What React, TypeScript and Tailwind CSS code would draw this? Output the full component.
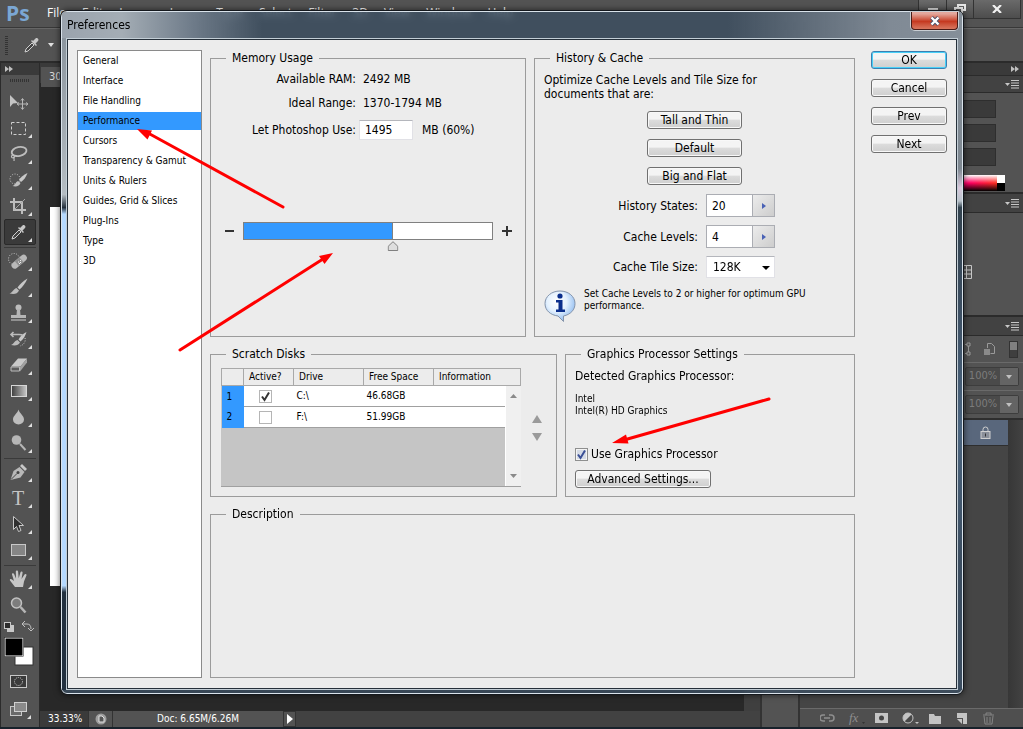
import React, { useState } from 'react';

const MENUS = ['File', 'Edit', 'Image', 'Layer', 'Type', 'Select', 'Filter', '3D', 'View', 'Window', 'Help'];

const SECTIONS = [
  'General',
  'Interface',
  'File Handling',
  'Performance',
  'Cursors',
  'Transparency & Gamut',
  'Units & Rulers',
  'Guides, Grid & Slices',
  'Plug-Ins',
  'Type',
  '3D',
];

const DISKS = [
  { id: 1, drive: 'C:\\', free: '46.68GB', active: true },
  { id: 2, drive: 'F:\\', free: '51.99GB', active: false },
];

const RAM_MAX = 2492;

/* ---------- tool icons (20x20) ---------- */

const EyedropperIcon = () => (
  <svg viewBox="0 0 20 20" className="size-5">
    <path d="M4 17l1-3 6-6 2 2-6 6z" fill="#444" stroke="#d0d0d0" />
    <path d="M10 6l5 5 1-1-1.500-1.500 2.500-2.500c1.500-1.500-1-4-2.500-2.500L12 6 11 5z" fill="#c8c8c8" />
  </svg>
);

const TOOL_GROUPS: { name: string; icon: React.ReactNode; plain?: boolean }[][] = [
  [
    {
      name: 'Move',
      plain: true,
      icon: (
        <svg viewBox="0 0 20 20" className="size-5">
          <path d="M2 3v12l3-3.500 5-.5z" fill="#c4c4c4" />
          <path d="M14.500 7v10M9.500 12h10M13 8.500l1.500-2 1.500 2M13 15.500l1.500 2 1.500-2M11 10.500l-2 1.500 2 1.500M18 10.500l2 1.500-2 1.500" fill="none" stroke="#b8b8b8" />
        </svg>
      ),
    },
    {
      name: 'Rectangular Marquee',
      icon: (
        <svg viewBox="0 0 20 20" className="size-5">
          <rect x="3.500" y="4.500" width="14" height="12" fill="none" stroke="#cfcfcf" strokeDasharray="3 2" />
        </svg>
      ),
    },
    {
      name: 'Lasso',
      icon: (
        <svg viewBox="0 0 20 20" className="size-5">
          <ellipse cx="11" cy="7.500" rx="7.500" ry="4.500" transform="rotate(-12 11 7)" fill="none" stroke="#bdbdbd" strokeWidth="1.800" />
          <path d="M5 11c-2 0-2 3 0 3s2-2.500 0-3M5 13c2 1 1 3 1 4" fill="none" stroke="#bdbdbd" strokeWidth="1.200" />
        </svg>
      ),
    },
    {
      name: 'Quick Selection',
      icon: (
        <svg viewBox="0 0 20 20" className="size-5">
          <circle cx="7" cy="9" r="5" fill="none" stroke="#c8c8c8" strokeDasharray="1 1.500" />
          <path d="M19.500 3c-4 2-7 4-8.500 7l2 2c3-2 5-5 6.500-9z" fill="#c8c8c8" />
          <path d="M10 11l2.500 2c-1 3-4 4-8 3 3-1 3-4 5.500-5z" fill="#c0c0c0" />
        </svg>
      ),
    },
    {
      name: 'Crop',
      icon: (
        <svg viewBox="0 0 20 20" className="size-5">
          <path d="M6 2v12h12M2 6h12v12" fill="none" stroke="#bdbdbd" strokeWidth="2" />
          <path d="M6.500 13.500L17 3" stroke="#a5a5a5" />
        </svg>
      ),
    },
    { name: 'Eyedropper', icon: <EyedropperIcon /> },
  ],
  [
    {
      name: 'Spot Healing Brush',
      icon: (
        <svg viewBox="0 0 20 20" className="size-5">
          <circle cx="6" cy="8" r="5.500" fill="none" stroke="#c8c8c8" strokeDasharray="1 1.500" />
          <rect x="2" y="7.500" width="18" height="6.500" rx="3.200" transform="rotate(-40 11 10.500)" fill="#b9b9b9" />
          <rect x="8" y="7.500" width="6" height="6.500" transform="rotate(-40 11 10.500)" fill="#8e8e8e" />
          <path d="M10 11h1M12 9.500h1M11 12.500h1M12 11.500h1" stroke="#eee" />
        </svg>
      ),
    },
    {
      name: 'Brush',
      icon: (
        <svg viewBox="0 0 20 20" className="size-5">
          <path d="M19.500 1.500C15 4 12 7 9.500 10.500l2 2C15 9.500 17.500 6 19.500 1.500z" fill="#c8c8c8" />
          <path d="M8.500 11l2.500 2.500C9.500 17 6 17.500 1.500 16.500 5 15.500 5 12 8.500 11z" fill="#bcbcbc" />
        </svg>
      ),
    },
    {
      name: 'Clone Stamp',
      icon: (
        <svg viewBox="0 0 20 20" className="size-5">
          <circle cx="10.500" cy="4.500" r="3" fill="#bcbcbc" />
          <path d="M9 6h3l.5 6H18v3H3v-3h5.500z" fill="#b5b5b5" />
          <path d="M3 17h15" stroke="#a5a5a5" strokeWidth="1.500" />
        </svg>
      ),
    },
    {
      name: 'History Brush',
      icon: (
        <svg viewBox="0 0 20 20" className="size-5">
          <path d="M18.500 3C14 5 12 8 10.500 10.500l2 2c3-2.500 5-6 6-9.500z" fill="#c8c8c8" />
          <path d="M9.500 11l2.500 2.500c-1.500 3-5 3.500-9 2.500 3-1 3-4 6.500-5z" fill="#bcbcbc" />
          <path d="M3 5.500h8c2 0 3 0 4 1M5.500 3L3 5.500 5.500 8" fill="none" stroke="#bcbcbc" strokeWidth="1.600" />
          <path d="M17 9c1 3-1 7-5 8" fill="none" stroke="#c8c8c8" strokeDasharray="1 1.500" />
        </svg>
      ),
    },
    {
      name: 'Eraser',
      icon: (
        <svg viewBox="0 0 20 20" className="size-5">
          <path d="M10 3.500h9l-6.500 8H3z" fill="#c9c9c9" />
          <path d="M3 12h8.500v4H3z" fill="#5c5c5c" stroke="#bbb" />
          <path d="M12 12l7-8.500v4L12 16.500z" fill="#a2a2a2" />
        </svg>
      ),
    },
    {
      name: 'Gradient',
      icon: (
        <svg viewBox="0 0 20 20" className="size-5">
          <defs>
            <linearGradient id="toolGradient">
              <stop stopColor="#3d3d3d" />
              <stop offset="1" stopColor="#c8c8c8" />
            </linearGradient>
          </defs>
          <rect x="3.500" y="4.500" width="15" height="11" fill="url(#toolGradient)" stroke="#d6d6d6" />
        </svg>
      ),
    },
    {
      name: 'Blur',
      icon: (
        <svg viewBox="0 0 20 20" className="size-5">
          <path d="M10.500 2.500c1 4 5.500 6 5.500 10a5.500 5 0 01-11 0c0-4 4.500-6 5.500-10z" fill="#bdbdbd" />
        </svg>
      ),
    },
    {
      name: 'Dodge',
      icon: (
        <svg viewBox="0 0 20 20" className="size-5">
          <circle cx="8.500" cy="7" r="4.800" fill="#b6b6b6" />
          <path d="M12 11l5.500 6" stroke="#b6b6b6" strokeWidth="2" />
        </svg>
      ),
    },
  ],
  [
    {
      name: 'Pen',
      icon: (
        <svg viewBox="0 0 20 20" className="size-5">
          <path d="M2.500 18l3-9 6-4 5 5-4 5.500z" fill="#b8b8b8" />
          <path d="M12 4l2-2 5 5-2 2z" fill="#c8c8c8" />
          <path d="M3 17.500l6-6" stroke="#444" />
          <circle cx="10" cy="10.500" r="1.500" fill="#444" />
        </svg>
      ),
    },
    {
      name: 'Type',
      icon: <span className="font-['Liberation_Serif',serif] text-[20px] leading-5 text-[#c4c4c4]">T</span>,
    },
    {
      name: 'Path Selection',
      icon: (
        <svg viewBox="0 0 20 20" className="size-5">
          <path d="M5.500 2.500v13l3-3 2 5 2.500-1-2-5h4.500z" fill="#2f2f2f" stroke="#c8c8c8" />
        </svg>
      ),
    },
    {
      name: 'Rectangle',
      icon: (
        <svg viewBox="0 0 20 20" className="size-5">
          <rect x="3.500" y="4.500" width="14" height="11" fill="#858585" stroke="#c8c8c8" />
        </svg>
      ),
    },
  ],
  [
    {
      name: 'Hand',
      icon: (
        <svg viewBox="0 0 20 20" className="size-5">
          <path d="M7 18L2 11.500c-.8-1.500 1-2 2-1L6 12 4 5.500c-.3-1.400 1.600-1.800 2.100-.5L8 9.500 7.800 2.500c0-1.500 2.200-1.500 2.300 0l.6 6.700L12.500 3.300c.4-1.400 2.300-1 2.100.4L13.500 10l3-4.500c.8-1.200 2.500-.4 1.900.9L16 12.500 15 18z" fill="#c6c6c6" />
        </svg>
      ),
    },
    {
      name: 'Zoom',
      plain: true,
      icon: (
        <svg viewBox="0 0 20 20" className="size-5">
          <circle cx="8.500" cy="8" r="5" fill="#7d7d7d" stroke="#c2c2c2" strokeWidth="1.500" />
          <path d="M12.500 12l5 5.500" stroke="#b6b6b6" strokeWidth="2.600" />
        </svg>
      ),
    },
  ],
];

/* ---------- dialog building blocks ---------- */

interface GroupProps {
  title: string;
  className?: string;
  children?: React.ReactNode;
}

function Group({ title, className = '', children }: GroupProps) {
  return (
    <fieldset className={`min-w-0 border border-[#9b9b9b] ${className}`}>
      <legend className="ml-[15px] px-[6px] leading-4">{title}</legend>
      {children}
    </fieldset>
  );
}

function PushButton({ children, primary, className = '' }: { children: React.ReactNode; primary?: boolean; className?: string }) {
  return (
    <button
      type="button"
      className={`h-[18px] rounded-[3px] border bg-linear-to-b from-[#f4f4f4] from-45% via-[#dcdcdc] via-50% to-[#cfcfcf] leading-4 ${
        primary ? 'border-[#3c7fb1] shadow-[inset_0_0_0_1px_#48d0f8]' : 'border-[#707070] shadow-[inset_0_0_0_1px_#f8f8f8]'
      } ${className}`}
    >
      {children}
    </button>
  );
}

function StepField({ id, value }: { id: string; value: string }) {
  return (
    <div className="flex h-[23px] w-[69px] border border-[#abadb3] bg-white">
      <input id={id} defaultValue={value} className="w-[45px] bg-white pl-[5px] outline-none" />
      <button type="button" aria-label="Open slider" className="grid flex-1 place-items-center border-l border-[#abadb3] bg-linear-to-br from-[#ececec] to-[#cdcdcd]">
        <svg viewBox="0 0 4 6" className="h-[6px] w-[4px]">
          <path d="M0 0l4 3-4 3z" fill="#4a62b5" />
        </svg>
      </button>
    </div>
  );
}

function CheckBox({ id, label, checked, onChange, blue }: { id: string; label?: string; checked: boolean; onChange: () => void; blue?: boolean }) {
  return (
    <span className="relative inline-block size-[13px] align-middle">
      <input
        id={id}
        type="checkbox"
        aria-label={label}
        checked={checked}
        onChange={onChange}
        className={`block size-[13px] appearance-none border ${blue ? 'border-[#8e8f8f] bg-[#d5dbe6] shadow-[inset_0_0_0_1px_#f4f4f4]' : 'border-[#b5b5b5] bg-white'}`}
      />
      {checked && (
        <svg viewBox="0 0 13 13" className="pointer-events-none absolute inset-0 size-[13px]">
          <path d="M3 6.500l2.500 3.500L10 2.500" fill="none" stroke={blue ? '#3a4f96' : '#333'} strokeWidth="2" />
        </svg>
      )}
    </span>
  );
}

function MemoryUsage() {
  const [ram, setRam] = useState(1495);
  const pct = (ram / RAM_MAX) * 100;

  return (
    <Group title="Memory Usage" className="h-[287px] w-[316px]">
      <div className="grid grid-cols-[145px_1fr] gap-x-[7px] pt-px leading-6">
        <span className="text-right">Available RAM:</span>
        <span>{RAM_MAX} MB</span>
        <span className="text-right">Ideal Range:</span>
        <span>1370-1794 MB</span>
        <label htmlFor="ram" className="pt-[3px] text-right">Let Photoshop Use:</label>
        <span className="flex items-center gap-[9px] pt-[3px]">
          <input
            id="ram"
            value={ram}
            onChange={(e) => setRam(Number(e.target.value) || 0)}
            className="-ml-1 h-5 w-[54px] border border-[#e1e1e6] border-t-[#b4b6bc] bg-white pl-[5px] outline-none"
          />
          MB ({Math.round(pct)}%)
        </span>
      </div>

      <div className="mt-20 flex items-start justify-center gap-[9px]">
        <button type="button" aria-label="Less" className="grid h-[18px] w-[10px] place-items-center">
          <span className="h-[2px] w-[9px] bg-[#333]" />
        </button>
        <div className="relative w-[250px]">
          <div className="h-[18px] border border-[#808080] bg-white">
            <div className="h-full border-r border-[#808080] bg-[#3399ff]" style={{ width: `${pct}%` }} />
          </div>
          <svg viewBox="0 0 11 10" className="absolute top-[19px] h-[10px] w-[11px] -translate-x-1/2" style={{ left: `${pct}%` }}>
            <path d="M5.500.7l4.800 4.600v4.200H.7V5.300z" fill="#dedede" stroke="#808080" />
          </svg>
          <input
            type="range"
            aria-label="Memory"
            min={0}
            max={RAM_MAX}
            value={ram}
            onChange={(e) => setRam(Number(e.target.value))}
            className="absolute inset-0 h-[28px] w-full opacity-0"
          />
        </div>
        <button type="button" aria-label="More" className="grid h-[18px] w-[10px] place-items-center">
          <svg viewBox="0 0 10 10" className="size-[10px]">
            <path d="M5 0v10M0 5h10" stroke="#333" strokeWidth="2" />
          </svg>
        </button>
      </div>
    </Group>
  );
}

function HistoryCache() {
  return (
    <Group title="History & Cache" className="h-[287px] flex-1">
      <p className="pt-[7px] pl-[9px] leading-[14px]">
        Optimize Cache Levels and Tile Size for
        <br />
        documents that are:
      </p>
      <div className="mt-[10px] flex flex-col items-center gap-[10px]">
        <PushButton className="w-[95px]">Tall and Thin</PushButton>
        <PushButton className="w-[95px]">Default</PushButton>
        <PushButton className="w-[95px]">Big and Flat</PushButton>
      </div>
      <div className="mt-[9px] grid grid-cols-[163px_1fr] items-center gap-x-2 gap-y-2">
        <label htmlFor="history" className="text-right">History States:</label>
        <StepField id="history" value="20" />
        <label htmlFor="levels" className="text-right">Cache Levels:</label>
        <StepField id="levels" value="4" />
        <label htmlFor="tile" className="text-right">Cache Tile Size:</label>
        <div className="relative w-[69px]">
          <select id="tile" defaultValue="128K" className="block h-[22px] w-full appearance-none border border-[#e1e1e6] border-t-[#b4b6bc] bg-white pl-[6px] outline-none">
            <option>128K</option>
            <option>256K</option>
            <option>1024K</option>
          </select>
          <svg viewBox="0 0 8 4" className="pointer-events-none absolute top-[10px] right-[5px] h-[4px] w-[8px]">
            <path d="M0 0h8L4 4z" />
          </svg>
        </div>
      </div>
      <div className="mt-2 flex gap-2 pl-[9px]">
        <svg viewBox="0 0 32 32" className="mt-[4px] size-8">
          <defs>
            <radialGradient id="infoFill" cx=".4" cy=".35" r=".65">
              <stop stopColor="#fff" />
              <stop offset=".5" stopColor="#e4f1fe" />
              <stop offset="1" stopColor="#93bdf0" />
            </radialGradient>
          </defs>
          <path d="M16 1C7.500 1 1 6.500 1 13.500S6.500 25 14 26l5.500 5.500V26C26.500 24.500 31 20 31 13.500 31 6.500 24.500 1 16 1z" fill="url(#infoFill)" stroke="#8494ab" />
          <circle cx="16" cy="6" r="2.600" fill="#0a2e8c" />
          <path d="M12 10h6.500v9.500H21V22h-9v-2.500h2.500v-7H12z" fill="#0a2e8c" />
        </svg>
        <p className="pt-[2px] text-[10px] leading-3">
          Set Cache Levels to 2 or higher for optimum GPU
          <br />
          performance.
        </p>
      </div>
    </Group>
  );
}

function ScratchDisks() {
  const [disks, setDisks] = useState(DISKS);

  const toggle = (id: number) => {
    setDisks(disks.map((d) => (d.id === id ? { ...d, active: !d.active } : d)));
  };

  return (
    <Group title="Scratch Disks" className="h-[151px] w-[347px]">
      <div className="flex items-center gap-[11px] pt-[6px] pl-[10px]">
        <div className="flex h-[119px] w-[300px] border-b border-[#a0a0a0] text-[10px]">
          <div className="w-full shrink-0 bg-[#c5c5c5]">
            <table className="w-full table-fixed border-collapse text-left">
              <thead>
                <tr className="h-[17px] bg-[#ececec]">
                  <th className="w-[22px] border border-[#a9a9a9] font-normal" aria-label="Number" />
                  <th className="w-[50px] border border-[#a9a9a9] pl-[5px] font-normal">Active?</th>
                  <th className="w-[70px] border border-[#a9a9a9] pl-[5px] font-normal">Drive</th>
                  <th className="w-[70px] border border-[#a9a9a9] pl-[5px] font-normal">Free Space</th>
                  <th className="border border-[#a9a9a9] pl-[5px] font-normal">Information</th>
                </tr>
              </thead>
              <tbody>
                {disks.map((disk) => (
                  <tr key={disk.id} className="h-[21px] bg-white">
                    <td className="bg-[#3399ff] pl-[5px]">{disk.id}</td>
                    <td className="border-b border-[#a0a0a0] pr-[6px] text-center">
                      <CheckBox id={`disk-${disk.id}`} label={`Use drive ${disk.drive}`} checked={disk.active} onChange={() => toggle(disk.id)} />
                    </td>
                    <td className="border-b border-[#a0a0a0] pl-[3px]">{disk.drive}</td>
                    <td className="border-b border-[#a0a0a0] pl-[3px]">{disk.free}</td>
                    <td className="border-b border-[#a0a0a0]" />
                  </tr>
                ))}
              </tbody>
            </table>
          </div>
          <div className="z-10 mt-[18px] -ml-4 flex w-4 shrink-0 flex-col items-center justify-between border-l border-white bg-[#f0f0f0] py-2">
            <svg viewBox="0 0 7 4" className="h-1 w-[7px]">
              <path d="M0 4l3.500-4L7 4z" fill="#8a8a8a" />
            </svg>
            <svg viewBox="0 0 7 4" className="h-1 w-[7px]">
              <path d="M0 0h7L3.500 4z" fill="#8a8a8a" />
            </svg>
          </div>
        </div>
        <div className="flex flex-col gap-[10px]">
          <button type="button" aria-label="Move disk up">
            <svg viewBox="0 0 10 8" className="block h-2 w-[10px]">
              <path d="M5 0l5 8H0z" fill="#9a9a9a" />
            </svg>
          </button>
          <button type="button" aria-label="Move disk down">
            <svg viewBox="0 0 10 8" className="block h-2 w-[10px]">
              <path d="M0 0h10L5 8z" fill="#9a9a9a" />
            </svg>
          </button>
        </div>
      </div>
    </Group>
  );
}

function GraphicsProcessor() {
  const [gpu, setGpu] = useState(true);

  return (
    <Group title="Graphics Processor Settings" className="h-[151px] flex-1">
      <div className="pt-[6px] pl-[9px]">
        <p className="leading-4">Detected Graphics Processor:</p>
        <p className="mt-[9px] text-[10px] leading-3">
          Intel
          <br />
          Intel(R) HD Graphics
        </p>
        <div className="mt-[29px] flex items-center gap-[3px] leading-4">
          <CheckBox id="gpu" blue checked={gpu} onChange={() => setGpu(!gpu)} />
          <label htmlFor="gpu">Use Graphics Processor</label>
        </div>
        <PushButton className="mt-2 w-[136px]">Advanced Settings...</PushButton>
      </div>
    </Group>
  );
}

function PreferencesDialog() {
  const [section, setSection] = useState('Performance');

  return (
    <section
      role="dialog"
      aria-label="Preferences"
      className="absolute top-[10px] right-[59px] left-[60px] overflow-hidden rounded-[7px] border border-[#14181d] text-xs text-black shadow-[0_0_6px_rgba(0,0,0,0.6)] backdrop-blur-[3px]"
    >
      <div className="rounded-[6px] border border-[#d9e2ea] bg-[#3c4f61]/80">
        <header className="flex h-[26px] items-start justify-between bg-[linear-gradient(to_right,#9aa3ad_0,#a4adb5_60px,#6f7c8a_130px,transparent_200px,transparent_74%,#808a95_92%,#858f99_100%)] pl-[5px]">
          <h1 className="pt-[5px] text-xs leading-4">Preferences</h1>
          <button type="button" aria-label="Close" className="mr-1 grid h-[18px] w-[47px] place-items-center rounded-b-[4px] border border-t-0 border-[#4b1b16] bg-linear-to-b from-[#e3a79c] from-10% via-[#c5381f] via-55% to-[#d8775f] shadow-[0_0_0_1px_#c9ced3]">
            <svg viewBox="0 0 12 10" className="h-[10px] w-3">
              <path d="M2.500 1.500l7 7M9.500 1.500l-7 7" stroke="#45506a" strokeWidth="4" />
              <path d="M2.500 1.500l7 7M9.500 1.500l-7 7" stroke="#fff" strokeWidth="2.400" />
            </svg>
          </button>
        </header>

        <div className="flex">
          <div className="w-[4px] bg-[linear-gradient(to_bottom,#8b959e_0,#b4bcc2_24%,#24303d_26%,#b5d9ff_27%,#b5d9ff_84%,#22303f_85%)]" />
          <div className="flex flex-1 border border-[#c3ced6]">
            <main className="flex flex-1 border border-[#26303a] bg-[#ececec] px-[9px] py-[10px]">
              <nav className="w-[125px] shrink-0 border border-[#8a8a8a] bg-white pt-px text-[10px]">
                {SECTIONS.map((item) => (
                  <button
                    key={item}
                    type="button"
                    onClick={() => setSection(item)}
                    className={`mb-[2px] block h-[18px] w-full pl-[5px] text-left whitespace-nowrap ${item === section ? 'bg-[#3399ff]' : ''}`}
                  >
                    {item}
                  </button>
                ))}
              </nav>
              <div className="ml-2 flex flex-1 flex-col gap-[9px]">
                <div className="flex gap-2">
                  <MemoryUsage />
                  <HistoryCache />
                </div>
                <div className="flex gap-2">
                  <ScratchDisks />
                  <GraphicsProcessor />
                </div>
                <Group title="Description" className="h-[172px]" />
              </div>
              <div className="ml-4 flex w-[76px] shrink-0 flex-col gap-[10px] pt-px">
                <PushButton primary>OK</PushButton>
                <PushButton>Cancel</PushButton>
                <PushButton>Prev</PushButton>
                <PushButton>Next</PushButton>
              </div>
            </main>
          </div>
          <div className="w-[4px] bg-[linear-gradient(to_bottom,#87919b_0,#7d8790_20%,#d8c8dc_23%,#b9c3cb_25%,#33434f_26%,#3b4d60_40%,#4b6580_60%,#3b4d60_80%)]" />
        </div>
        <div className="h-[3px]" />
      </div>
    </section>
  );
}

/* ---------- workspace behind the dialog ---------- */

function PanelMenu() {
  return (
    <button type="button" aria-label="Panel menu">
      <svg viewBox="0 0 14 9" className="block h-[9px] w-[14px]">
        <path d="M0 3h5L2.500 6z" fill="#c8c8c8" />
        <path d="M6 .5h8M6 3h8M6 5.500h8M6 8h8" stroke="#c8c8c8" />
      </svg>
    </button>
  );
}

function Collapse() {
  return (
    <svg viewBox="0 0 8 6" className="h-[6px] w-2">
      <path d="M0 0l4 3-4 3zM4 0l4 3-4 3z" fill="#c0c0c0" />
    </svg>
  );
}

function Toolbar() {
  return (
    <aside className="flex w-10 shrink-0 flex-col border-r border-l border-[#2b2b2b] bg-[#535353]">
      <div className="flex h-3 items-center bg-[#3a3a3a] pl-1">
        <Collapse />
      </div>
      <div className="mx-auto mt-[4px] mb-[7px] h-[3px] w-5 bg-[repeating-linear-gradient(to_right,#333_0_1px,#535353_1px_2px)]" />
      <div className="flex flex-col divide-y divide-[#3a3a3a]">
        {TOOL_GROUPS.map((group, i) => (
          <div key={i} className="mx-[3px] pb-[2px]">
            {group.map((tool) => (
              <button
                key={tool.name}
                type="button"
                aria-label={tool.name}
                className={`relative flex h-[26px] w-8 items-center justify-center rounded-[2px] border pr-1 ${
                  tool.name === 'Eyedropper' ? 'border-[#2a2a2a] bg-[#3a3a3a]' : 'border-transparent'
                }`}
              >
                {tool.icon}
                {!tool.plain && (
                  <svg viewBox="0 0 4 4" className="absolute right-[3px] bottom-[2px] size-1">
                    <path d="M4 0v4H0z" fill="#e0e0e0" />
                  </svg>
                )}
              </button>
            ))}
          </div>
        ))}
      </div>
      <svg viewBox="0 0 37 106" className="h-[106px] w-[37px]">
        <rect x="6" y="5" width="7" height="7" fill="#c8c8c8" />
        <rect x="3.500" y="2.500" width="6" height="6" fill="#2b2b2b" stroke="#c8c8c8" />
        <path d="M22 4h4q4 0 4 5M24 1l-3 3 3 3M27 8l3 3 3-3" fill="none" stroke="#c0c0c0" />
        <rect x="14" y="27" width="18" height="18" fill="#fff" stroke="#333" />
        <rect x="4" y="18" width="18" height="18" fill="#000" stroke="#fff" />
        <rect x="3.500" y="17.500" width="19" height="19" fill="none" stroke="#222" strokeWidth=".5" />
        <rect x="9.500" y="55.500" width="16" height="12" fill="#3a3a3a" stroke="#c8c8c8" />
        <circle cx="17.500" cy="61.500" r="4" fill="none" stroke="#d0d0d0" strokeDasharray="1 1" />
        <rect x="9.500" y="86.500" width="11" height="9" fill="#6a6a6a" stroke="#c8c8c8" />
        <rect x="13.500" y="82.500" width="12" height="9" fill="#8a8a8a" stroke="#d0d0d0" />
        <path d="M30 95v4h-4z" fill="#e0e0e0" />
      </svg>
    </aside>
  );
}

function DocumentArea() {
  return (
    <div className="flex min-w-0 flex-1 flex-col bg-[#282828]">
      <div className="h-5 bg-[#3a3a3a] pl-px">
        <button type="button" className="h-5 bg-[#535353] px-[8px] text-[11px] text-[#d6d6d6]">30.psd</button>
      </div>
      <div className="flex flex-1">
        <div className="mt-[124px] ml-[10px] h-[379px] flex-1 bg-white" />
        <div className="ml-12 w-4 bg-[#3f3f3f]" />
      </div>
      <footer className="flex h-4 items-stretch bg-[#424242] text-[10px] text-white">
        <span className="w-12 bg-[#3a3a3a] pl-2 leading-4">33.33%</span>
        <span className="grid w-[25px] place-items-center border-x border-[#333] bg-[#535353]">
          <svg viewBox="0 0 12 12" className="size-3">
            <circle cx="6" cy="6" r="5.500" fill="#9d9d9d" />
            <path d="M4 3h3l2 2v4H4z" fill="#555" stroke="#e0e0e0" />
          </svg>
        </span>
        <span className="w-[170px] bg-[#535353] text-center leading-4">Doc: 6.65M/6.26M</span>
        <button type="button" aria-label="Status options" className="grid w-[13px] place-items-center border border-[#333] bg-[#535353]">
          <svg viewBox="0 0 6 10" className="h-[10px] w-[6px]">
            <path d="M0 0l6 5-6 5z" fill="#fff" />
          </svg>
        </button>
      </footer>
    </div>
  );
}

function OpacityRow() {
  return (
    <div className="flex h-7 items-center justify-end border-t border-[#6a6a6a] pr-1 text-[11px] text-[#7c7c7c]">
      <div className="flex h-[19px] items-center rounded-[2px] border border-[#3d3d3d] bg-[#4a4a4a]">
        <span className="w-[34px] text-center">100%</span>
        <span className="grid h-full w-[18px] place-items-center bg-[#646464]">
          <svg viewBox="0 0 6 4" className="h-1 w-[6px]">
            <path d="M0 0h6L3 4z" fill="#c0c0c0" />
          </svg>
        </span>
      </div>
    </div>
  );
}

function Panels() {
  return (
    <aside className="flex w-[223px] shrink-0 flex-col bg-[#535353]">
      <div className="flex h-3 items-center justify-end bg-[#3a3a3a] pr-1">
        <Collapse />
      </div>
      <div className="flex h-[17px] items-center justify-end border-t border-[#2b2b2b] bg-[#424242] pr-1">
        <PanelMenu />
      </div>
      <div className="flex h-[100px] flex-col gap-[6px] border-t border-[#2b2b2b] pt-[7px] pl-[110px]">
        <span className="h-[18px] w-[86px] border border-[#2e2e2e] bg-[#3a3a3a]" />
        <span className="h-[18px] w-[86px] border border-[#2e2e2e] bg-[#3a3a3a]" />
        <span className="h-[18px] w-[86px] border border-[#2e2e2e] bg-[#3a3a3a]" />
        <span className="mt-[3px] flex h-4 w-[95px]">
          <span className="flex-1 bg-[linear-gradient(to_bottom,#fff,transparent_50%,#000),linear-gradient(to_right,#ff00c8,#ff0060_70%,#ff3020)]" />
          <span className="w-2 bg-[linear-gradient(to_bottom,#fff_50%,#000_50%)]" />
        </span>
      </div>
      <div className="flex h-[20px] items-center justify-end border-t-2 border-[#2b2b2b] bg-[#424242] pr-1">
        <PanelMenu />
      </div>
      <div className="flex h-[103px] items-center border-t border-[#2b2b2b] pl-[161px]">
        <svg viewBox="0 0 12 14" className="mt-[15px] h-[14px] w-3">
          <path d="M0 .5h10.500v13H0M0 5h10M0 9h10M5.500 0v14" fill="none" stroke="#c8c8c8" />
        </svg>
      </div>
      <div className="flex h-[20px] items-center justify-end border-t-2 border-[#2b2b2b] bg-[#424242] pr-1">
        <PanelMenu />
      </div>
      <div className="flex h-[27px] items-center justify-end gap-[14px] border-t border-[#2b2b2b] pr-[5px]">
        <svg viewBox="0 0 30 14" className="h-[14px] w-[30px]">
          <path d="M0 2.500h4M0 11.500h4M3.500 3v8" fill="none" stroke="#9a9a9a" />
          <path d="M2 1h3v3H2zM2 10h3v3H2z" fill="#535353" stroke="#9a9a9a" />
          <path d="M22.500 6V1.500h4l3 3v7h-4" fill="none" stroke="#9a9a9a" />
          <path d="M19 7h6v6h-6z" fill="#8a8a8a" />
        </svg>
        <span className="h-[17px] w-[9px] border border-[#333] bg-[#3f3f3f]">
          <span className="block h-2 bg-[#808080]" />
        </span>
      </div>
      <OpacityRow />
      <OpacityRow />
      <div className="flex flex-1 border-t-2 border-[#2e2e2e] bg-[#454545]">
        <div className="flex-1">
          <div className="flex h-[26px] items-center justify-end border-b border-[#2e2e2e] bg-[#59677c] pr-[17px]">
            <svg viewBox="0 0 11 13" className="h-[13px] w-[11px]">
              <path d="M3 5.500V3.500a2.500 2.500 0 015 0v2" fill="none" stroke="#d0d0d0" />
              <rect x="1" y="5.500" width="9" height="7" fill="#8a8f99" stroke="#d0d0d0" />
              <path d="M5.500 7.500v3" stroke="#333" />
            </svg>
          </div>
        </div>
        <div className="w-[15px] bg-linear-to-r from-[#373737] to-[#424242]" />
      </div>
      <footer className="flex h-[19px] items-center border-t border-[#6a6a6a] bg-[#4f4f4f] pl-5">
        <svg viewBox="0 0 176 14" className="h-[14px] w-[176px]">
          <path d="M5 4H3a3 3 0 000 6h2M9 4h2a3 3 0 010 6H9M4 7h6" fill="none" stroke="#8e8e8e" strokeWidth="1.500" />
          <text x="29" y="11" fill="#8e8e8e" fontSize="13" fontStyle="italic" fontFamily="Liberation Serif">fx</text>
          <path d="M42 11h3l-1.500 2z" fill="#333" />
          <path d="M55 2h13v10H55z" fill="#c4c4c4" />
          <circle cx="61.500" cy="7" r="2.500" fill="#444" />
          <circle cx="88" cy="7" r="5" fill="#484848" stroke="#c4c4c4" />
          <path d="M84.500 10.500l7-7A5 5 0 0084.500 3.500a5 5 0 000 7z" fill="#c4c4c4" />
          <path d="M95 11h4l-2 2z" fill="#c4c4c4" />
          <path d="M109 3h5l1 2h6v8h-12z" fill="#c4c4c4" />
          <path d="M137 2h10v11h-4V7h-6z" fill="#c4c4c4" />
          <path d="M137 8h5v5z" fill="#c4c4c4" />
          <path d="M163 4h11M166 4V2h5v2M164 5l1 8h7l1-8M167 6v6M170 6v6" fill="none" stroke="#858585" />
        </svg>
      </footer>
    </aside>
  );
}

// Pointers drawn over the dialog
function Arrows() {
  return (
    <svg width="1023" height="729" className="pointer-events-none absolute top-0 left-0" aria-hidden="true">
      <g stroke="#f00" strokeWidth="3" strokeLinecap="round" fill="#f00">
        <path d="M283 207L148 133M180 350L323 259M769 399L624 440" />
        <path stroke="none" d="M137 129l15 1.500-4.500 9zM333 253l-8.500 11-5.500-8zM612 443l14-8.500 2.500 9z" />
      </g>
    </svg>
  );
}

function App() {
  return (
    <div className="relative flex min-h-screen flex-col overflow-hidden bg-[#535353] font-['DejaVu_Sans_Condensed','Noto_Sans',sans-serif]">
      <header className="flex h-7 items-start justify-between border-b border-[#383838]">
        <div className="flex h-[26px] items-center">
          <span className="w-[47px] pl-[6px] font-['Open_Sans',sans-serif] text-[21px] leading-6 font-bold text-[#7ba7d4]">Ps</span>
          <nav className="flex gap-4 font-['Open_Sans',sans-serif] text-xs text-white">
            {MENUS.map((menu) => (
              <button key={menu} type="button">{menu}</button>
            ))}
          </nav>
        </div>
        <div className="mr-[2px] flex h-[19px] border border-t-0 border-[#333] bg-linear-to-b from-[#6a6a6a] to-[#4d4d4d]">
          <button type="button" aria-label="Minimize" className="grid w-7 place-items-center border-r border-[#333]">
            <span className="h-[2px] w-[10px] bg-[#e0e0e0]" />
          </button>
          <button type="button" aria-label="Restore" className="grid w-[27px] place-items-center border-r border-[#333]">
            <svg viewBox="0 0 12 10" className="h-[10px] w-3">
              <path d="M4 3V1h7v5H8M1 4h7v5H1z" fill="none" stroke="#e8e8e8" strokeWidth="2" />
            </svg>
          </button>
          <button type="button" aria-label="Close application" className="grid w-[46px] place-items-center">
            <svg viewBox="0 0 10 8" className="h-2 w-[10px]">
              <path d="M1 0l8 8M9 0L1 8" stroke="#f0f0f0" strokeWidth="2.200" />
            </svg>
          </button>
        </div>
      </header>

      <div className="flex h-[34px] items-center gap-[13px] border-t border-b border-t-[#666] border-b-[#2b2b2b] pl-[5px]">
        <span className="h-[19px] w-[3px] bg-[repeating-linear-gradient(to_bottom,#333_0_1px,#535353_1px_2px)]" />
        <button type="button" aria-label="Tool preset" className="flex items-center gap-[7px]">
          <EyedropperIcon />
          <svg viewBox="0 0 6 4" className="h-1 w-[6px]">
            <path d="M0 0h6L3 4z" fill="#e0e0e0" />
          </svg>
        </button>
      </div>

      <div className="flex flex-1 border-t border-[#2b2b2b]">
        <Toolbar />
        <DocumentArea />
        <div className="w-[40px] shrink-0 border-x-2 border-[#333] bg-[#535353]" />
        <Panels />
      </div>
      <div className="h-[2px] bg-[#18222b]" />

      <PreferencesDialog />
      <Arrows />
    </div>
  );
}

export default App;
